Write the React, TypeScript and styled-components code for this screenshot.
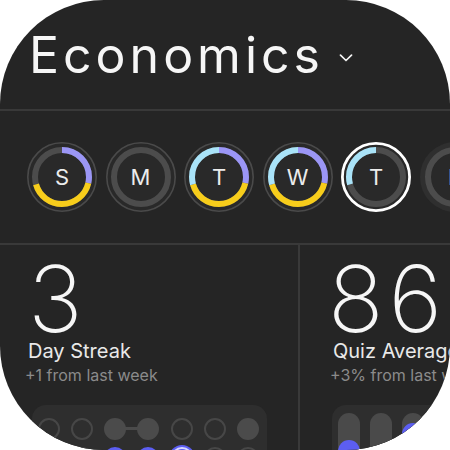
import React from "react";
import styled, { createGlobalStyle } from "styled-components";

const Global = createGlobalStyle`
  html, body { margin: 0; padding: 0; background: #ffffff; }
  body { font-family: Inter, "Noto Sans", sans-serif; }
  * { box-sizing: border-box; }
`;

const Screen = styled.div`
  width: 450px;
  height: 450px;
  overflow: hidden;
  border-radius: 104px;
  background: #252525;
  color: #f4f4f4;
  display: flex;
  flex-direction: column;
`;

const Header = styled.header`
  flex: none;
  height: 111px;
  display: flex;
  align-items: center;
  padding-left: 29px;
  border-bottom: 2px solid #393939;
`;

const Title = styled.h1`
  margin: 0;
  font-family: Inter, sans-serif;
  font-size: 50px;
  font-weight: 400;
  line-height: 1;
  letter-spacing: 4px;
  color: #f6f6f6;
`;

const Chevron = styled.svg`
  margin-left: 15px;
  margin-top: 6px;
  flex: none;
`;

const DaysRow = styled.div`
  flex: none;
  height: 134px;
  display: flex;
  align-items: center;
  gap: 8.5px;
  padding-left: 27px;
  border-bottom: 2px solid #393939;
`;

const Day = styled.div`
  position: relative;
  flex: none;
  width: 70px;
  height: 70px;
  display: flex;
  align-items: center;
  justify-content: center;
`;

const DayRing = styled.svg`
  position: absolute;
  inset: 0;
`;

const DayLetter = styled.span`
  position: relative;
  font-size: 22px;
  font-weight: 400;
  color: #ececec;
  line-height: 1;
`;

const Stats = styled.div`
  flex: 1;
  display: grid;
  grid-template-columns: 300px 300px;
`;

const Cell = styled.section<{ $divider?: boolean }>`
  padding: 13.6px 0 0 28px;
  border-right: ${(p) => (p.$divider ? "2px solid #393939" : "none")};
  white-space: nowrap;
`;

const BigNumber = styled.div`
  font-size: 92px;
  font-weight: 200;
  line-height: 80px;
  letter-spacing: 5px;
  color: #f6f6f6;
`;

const Label = styled.div<{ $shift?: number }>`
  margin-left: ${(p) => p.$shift ?? 0}px;
  font-size: 20px;
  line-height: 24px;
  color: #e9e9e9;
`;

const Sub = styled.div<{ $shift?: number }>`
  margin-top: 2px;
  margin-left: ${(p) => p.$shift ?? 0}px;
  font-size: 16px;
  line-height: 20px;
  color: #8b8b8b;
`;

const DotPanel = styled.div`
  margin-top: 20px;
  margin-left: 4px;
  width: 235px;
  background: #2e2e2e;
  border-radius: 14px;
  display: grid;
  grid-template-columns: repeat(7, 1fr);
  row-gap: 7px;
  padding: 13px 2px 14px 0;
  justify-items: center;
`;

type DotKind = "outline" | "filled" | "blue" | "today";

const Dot = styled.div<{ $kind: DotKind; $link?: boolean }>`
  position: relative;
  width: 22px;
  height: 22px;
  border-radius: 50%;
  border: ${(p) =>
    p.$kind === "outline"
      ? "2.5px solid #474747"
      : p.$kind === "today"
      ? "2.5px solid #d8d8ff"
      : "none"};
  background: ${(p) =>
    p.$kind === "outline" ? "transparent" : p.$kind === "filled" ? "#4b4b4b" : "#5c5ef2"};
  box-shadow: ${(p) => (p.$kind === "today" ? "0 0 0 2px #5c5ef2" : "none")};
  &::after {
    content: "";
    display: ${(p) => (p.$link ? "block" : "none")};
    position: absolute;
    left: 20px;
    top: 9.5px;
    width: 16px;
    height: 3px;
    background: #4b4b4b;
  }
`;

const BarPanel = styled.div`
  margin-top: 20px;
  margin-left: 4px;
  width: 235px;
  height: 120px;
  background: #2e2e2e;
  border-radius: 14px;
  display: flex;
  gap: 10px;
  padding: 8px 6px;
`;

const Bar = styled.div`
  position: relative;
  flex: none;
  width: 22px;
  height: 100px;
  border-radius: 11px;
  background: #4a4a4a;
  overflow: hidden;
`;

const BarFill = styled.div`
  position: absolute;
  left: 0;
  right: 0;
  bottom: 0;
  border-radius: 11px;
  background: #5c5ef2;
`;

const PURPLE = "#9b96f6";
const YELLOW = "#f7cd1b";
const CYAN = "#a9e3f8";

type Seg = { from: number; to: number; color: string };

const R = 27;
const C = 2 * Math.PI * R;

function Ring({ segs, selected, future }: { segs: Seg[]; selected?: boolean; future?: boolean }) {
  return (
    <DayRing width="70" height="70" viewBox="0 0 70 70">
      {future ? (
        <circle cx="35" cy="35" r="35" fill="#2f2f2f" />
      ) : selected ? (
        <circle cx="35" cy="35" r="33.6" fill="#292929" stroke="#ffffff" strokeWidth="2.8" />
      ) : (
        <circle cx="35" cy="35" r="34.2" fill="#292929" stroke="#4a4a4a" strokeWidth="1.6" />
      )}
      {future && <circle cx="35" cy="35" r="24" fill="#292929" />}
      <circle cx="35" cy="35" r={R} fill="none" stroke="#4c4c4c" strokeWidth="6" />
      {segs.map((s, i) => {
        const len = ((s.to - s.from) / 360) * C;
        return (
          <circle
            key={i}
            cx="35"
            cy="35"
            r={R}
            fill="none"
            stroke={s.color}
            strokeWidth="6"
            strokeDasharray={`${len} ${C - len}`}
            strokeDashoffset={-(s.from / 360) * C}
            transform="rotate(-90 35 35)"
          />
        );
      })}
    </DayRing>
  );
}

const full: Seg[] = [
  { from: 0, to: 103, color: PURPLE },
  { from: 103, to: 253, color: YELLOW },
  { from: 253, to: 360, color: CYAN },
];

const days: { l: string; segs: Seg[]; selected?: boolean; future?: boolean }[] = [
  { l: "S", segs: full.slice(0, 2) },
  { l: "M", segs: [] },
  { l: "T", segs: full },
  { l: "W", segs: full },
  { l: "T", segs: [{ from: 253, to: 360, color: CYAN }], selected: true },
  { l: "F", segs: [], future: true },
];

const row1: { k: DotKind; link?: boolean }[] = [
  { k: "outline" },
  { k: "outline" },
  { k: "filled", link: true },
  { k: "filled" },
  { k: "outline" },
  { k: "outline" },
  { k: "filled" },
];

const row2: { k: DotKind }[] = [
  { k: "outline" },
  { k: "outline" },
  { k: "blue" },
  { k: "blue" },
  { k: "today" },
  { k: "outline" },
  { k: "outline" },
];

const bars = [27, 60, 10, 40, 70, 30, 50];

export default function App() {
  return (
    <>
      <Global />
      <Screen>
        <Header>
          <Title>Economics</Title>
          <Chevron width="14" height="8" viewBox="0 0 14 8">
            <path d="M1.5 1.2 L7 6.5 L12.5 1.2" fill="none" stroke="#f2f2f2" strokeWidth="1.7" strokeLinecap="round" strokeLinejoin="round" />
          </Chevron>
        </Header>
        <DaysRow>
          {days.map((d, i) => (
            <Day key={i}>
              <Ring segs={d.segs} selected={d.selected} future={d.future} />
              <DayLetter>{d.l}</DayLetter>
            </Day>
          ))}
        </DaysRow>
        <Stats>
          <Cell $divider>
            <BigNumber>3</BigNumber>
            <Label>Day Streak</Label>
            <Sub $shift={-3}>+1 from last week</Sub>
            <DotPanel>
              {row1.map((d, i) => (
                <Dot key={"a" + i} $kind={d.k} $link={d.link} />
              ))}
              {row2.map((d, i) => (
                <Dot key={"b" + i} $kind={d.k} />
              ))}
            </DotPanel>
          </Cell>
          <Cell>
            <BigNumber>86%</BigNumber>
            <Label $shift={5}>Quiz Average</Label>
            <Sub $shift={2}>+3% from last week</Sub>
            <BarPanel>
              {bars.map((t, i) => (
                <Bar key={i}>
                  <BarFill style={{ top: t }} />
                </Bar>
              ))}
            </BarPanel>
          </Cell>
        </Stats>
      </Screen>
    </>
  );
}
